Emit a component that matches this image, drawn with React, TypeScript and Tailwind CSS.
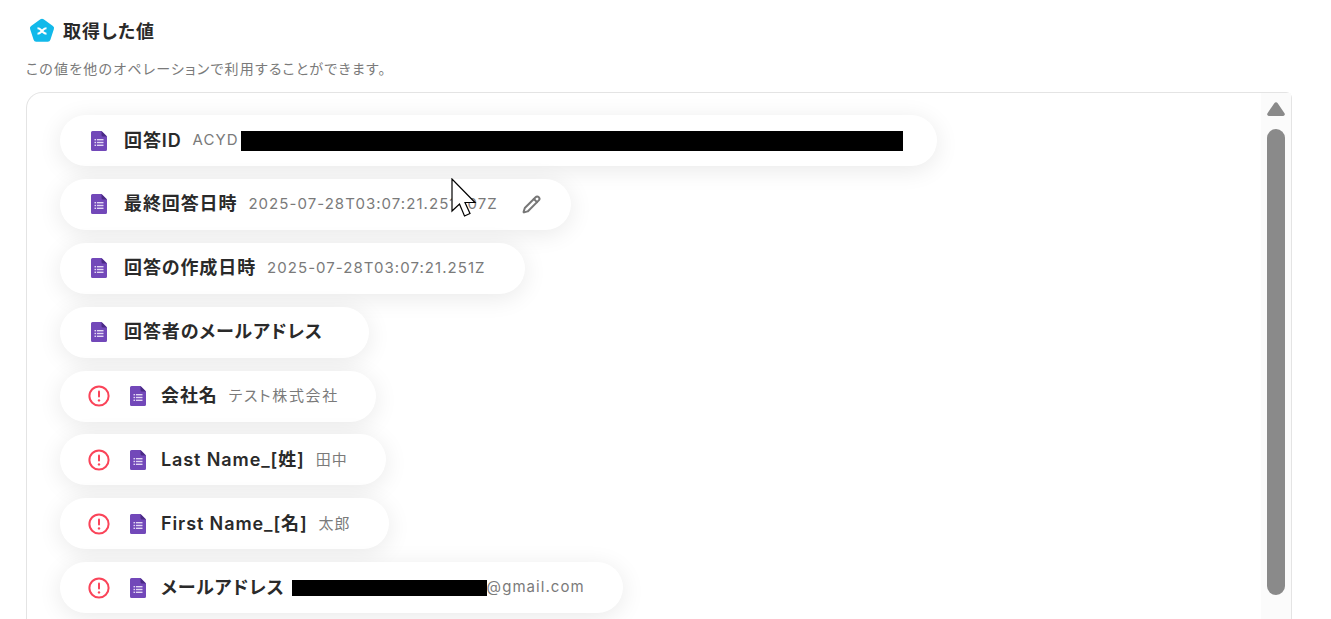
import { Pencil } from "lucide-react";

const FONT = "font-['Inter','Noto_Sans_CJK_JP',sans-serif] [font-feature-settings:'palt']";

function FormIcon() {
  return (
    <svg width="16" height="20" viewBox="0 0 16 20" className="shrink-0">
      <path d="M1.5 0H10.5L16 5.5V18.5A1.5 1.5 0 0 1 14.5 20H1.5A1.5 1.5 0 0 1 0 18.5V1.5A1.5 1.5 0 0 1 1.5 0Z" fill="#7248b9" />
      <path d="M10.5 0L16 5.5H12A1.5 1.5 0 0 1 10.5 4Z" fill="#4a2a86" />
      <g fill="#e2d6f3">
        <rect x="3.5" y="8" width="1.6" height="1.4" />
        <rect x="3.5" y="10.8" width="1.6" height="1.4" />
        <rect x="3.5" y="13.6" width="1.6" height="1.4" />
        <rect x="6" y="8" width="6.5" height="1.4" />
        <rect x="6" y="10.8" width="6.5" height="1.4" />
        <rect x="6" y="13.6" width="6.5" height="1.4" />
      </g>
    </svg>
  );
}

function AlertIcon() {
  return (
    <svg width="22" height="22" viewBox="0 0 22 22" className="shrink-0">
      <circle cx="11" cy="11" r="9.6" fill="none" stroke="#fa4459" strokeWidth="2" />
      <rect x="10" y="5.5" width="2" height="7" rx="1" fill="#fa4459" />
      <circle cx="11" cy="15.4" r="1.2" fill="#fa4459" />
    </svg>
  );
}

function Logo() {
  return (
    <svg width="28" height="28" viewBox="0 0 28 28" className="shrink-0">
      <path d="M12.4 2.2a2.8 2.8 0 0 1 3.2 0l9.3 6.7a2.6 2.6 0 0 1 1 3l-3.5 10.9a2.7 2.7 0 0 1-2.6 1.9H8.2a2.7 2.7 0 0 1-2.6-1.9L2.1 11.9a2.6 2.6 0 0 1 1-3Z" fill="#12b9ea" />
      <path d="M9.5 11.2c2.6 0 3 1.400 4.500 2.800s1.900 2.800 4.500 2.800M18.500 11.200c-2.600 0-3 1.400-4.500 2.800s-1.900 2.800-4.500 2.800" fill="none" stroke="#fff" strokeWidth="2" />
    </svg>
  );
}

function Cursor() {
  return (
    <svg width="26" height="40" viewBox="0 0 26 40" className="absolute left-[451px] top-[178px]">
      <path d="M1 1V33L8.5 26L13.5 38L19 35.500L14 24.500H24Z" fill="#fff" stroke="#000" strokeWidth="1.200" />
    </svg>
  );
}

function Pill({
  label,
  alert,
  width,
  gap,
  children,
}: {
  label: string;
  alert?: boolean;
  width: string;
  gap?: string;
  children?: React.ReactNode;
}) {
  return (
    <div className={`flex h-[51px] shrink-0 items-center rounded-full bg-white shadow-[0_4px_24px_rgba(0,0,0,0.09)] ${width} ${alert ? "pl-[28px]" : "pl-[31px]"}`}>
      {alert && (
        <span className="mr-[20px]">
          <AlertIcon />
        </span>
      )}
      <FormIcon />
      <span className={`${alert ? "ml-[15px]" : "ml-[17px]"} text-[18px] leading-6 font-semibold tracking-[0.9px] whitespace-nowrap text-[#2a2a2a]`}>{label}</span>
      {children && (
        <span className={`flex items-center text-[15px] tracking-[1.05px] whitespace-nowrap text-[#7a7a7a] ${gap ?? "ml-[11px]"}`}>
          {children}
        </span>
      )}
    </div>
  );
}

export default function App() {
  return (
    <div className={`relative h-[619px] w-[1331px] overflow-hidden bg-white ${FONT}`}>
      <div className="pt-[17px] pl-[26px]">
        <div className="flex h-[28px] items-center gap-[7px] pl-[2px]">
          <Logo />
          <h2 className="text-[18px] font-semibold tracking-[1px] text-[#2a2a2a]">取得した値</h2>
        </div>
        <p className="mt-[14px] text-[14px] leading-[20px] tracking-[1.2px] text-[#7a7a7a]">この値を他のオペレーションで利用することができます。</p>

        <div className="mt-[13px] flex h-[600px] w-[1266px] rounded-tl-[16px] rounded-tr-[6px] border-t border-r border-l border-[#e4e4e4]">
          <div className="flex min-w-0 flex-1 flex-col items-start gap-[12.875px] pt-[22px] pl-[33px]">
            <Pill label="回答ID" width="w-[877px]">
              ACYD<span className="ml-[2px] h-[20px] w-[662px] bg-black" />
            </Pill>
            <Pill label="最終回答日時" width="w-[511px]">
              2025-07-28T03:07:21.251+07Z
              <Pencil className="ml-[24px] h-[19px] w-[19px] text-[#777]" strokeWidth={2.5} />
            </Pill>
            <Pill label="回答の作成日時" width="w-[465px]">2025-07-28T03:07:21.251Z</Pill>
            <Pill label="回答者のメールアドレス" width="w-[309px]" />
            <Pill label="会社名" alert width="w-[316px]">
              <span className="tracking-[1.65px]">テスト株式会社</span>
            </Pill>
            <Pill label="Last Name_[姓]" alert width="w-[326px]">田中</Pill>
            <Pill label="First Name_[名]" alert width="w-[329px]">太郎</Pill>
            <Pill label="メールアドレス" alert width="w-[563px]" gap="ml-[7px]">
              <span className="h-[16px] w-[195px] bg-black" />
              @gmail.com
            </Pill>
          </div>

          <div className="flex w-[30px] shrink-0 flex-col items-center bg-[#fbfbfb] pt-[9px]">
            <svg width="18" height="14" viewBox="0 0 18 14">
              <path d="M7.300 1.200a2 2 0 0 1 3.400 0l6.800 10a1.800 1.800 0 0 1-1.500 2.800H2a1.800 1.800 0 0 1-1.500-2.800Z" fill="#8a8a8a" />
            </svg>
            <div className="mt-[13px] h-[466px] w-[18px] rounded-full bg-[#8a8a8a]" />
          </div>
        </div>
      </div>
      <Cursor />
    </div>
  );
}
